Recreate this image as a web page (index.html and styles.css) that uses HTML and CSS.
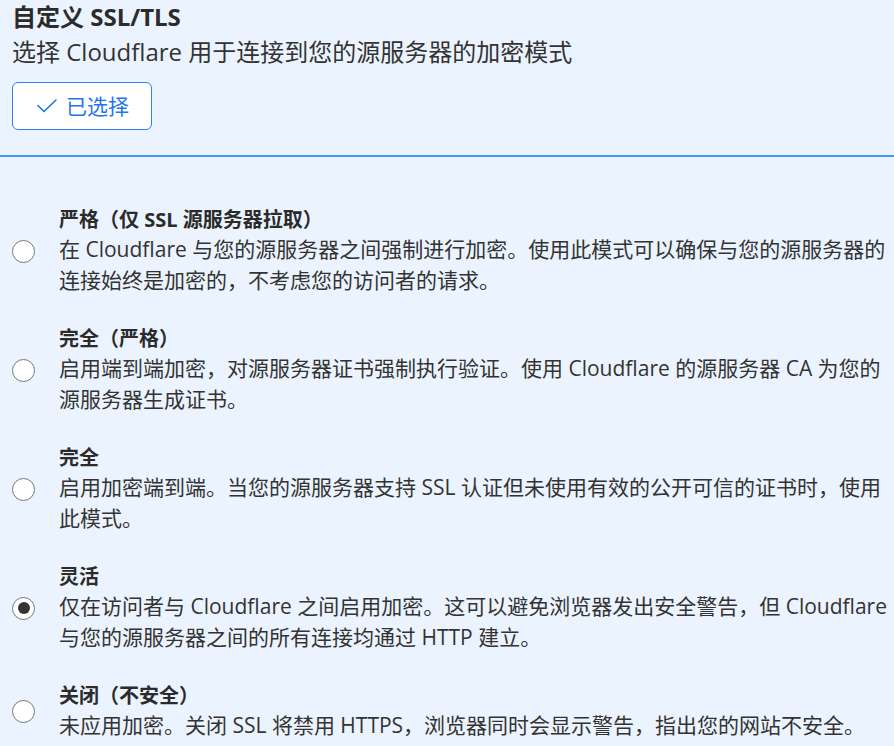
FILE: index.html
```html
<!DOCTYPE html>
<html lang="zh-CN">
<head>
<meta charset="utf-8">
<title>自定义 SSL/TLS</title>
<link rel="stylesheet" href="styles.css">
</head>
<body>
  <header class="header">
    <h1 class="title">自定义 SSL/TLS</h1>
    <p class="subtitle">选择 Cloudflare 用于连接到您的源服务器的加密模式</p>
    <button class="btn" type="button">
      <svg class="check" width="20" height="14" viewBox="0 0 20 14" aria-hidden="true">
        <polyline points="1,6.5 7,12.5 19,1" fill="none" stroke="currentColor" stroke-width="1.6" stroke-linecap="round" stroke-linejoin="round"/>
      </svg>
      <span>已选择</span>
    </button>
  </header>

  <main class="options">
    <label class="option">
      <span class="radio"></span>
      <span class="text">
        <span class="opt-title">严格（仅 SSL 源服务器拉取）</span>
        <span class="opt-desc">在 Cloudflare 与您的源服务器之间强制进行加密。使用此模式可以确保与您的源服务器的连接始终是加密的，不考虑您的访问者的请求。</span>
      </span>
    </label>
    <label class="option">
      <span class="radio"></span>
      <span class="text">
        <span class="opt-title">完全（严格）</span>
        <span class="opt-desc">启用端到端加密，对源服务器证书强制执行验证。使用 Cloudflare 的源服务器 CA 为您的源服务器生成证书。</span>
      </span>
    </label>
    <label class="option">
      <span class="radio"></span>
      <span class="text">
        <span class="opt-title">完全</span>
        <span class="opt-desc">启用加密端到端。当您的源服务器支持 SSL 认证但未使用有效的公开可信的证书时，使用此模式。</span>
      </span>
    </label>
    <label class="option">
      <span class="radio checked"></span>
      <span class="text">
        <span class="opt-title">灵活</span>
        <span class="opt-desc">仅在访问者与 Cloudflare 之间启用加密。这可以避免浏览器发出安全警告，但 Cloudflare 与您的源服务器之间的所有连接均通过 HTTP 建立。</span>
      </span>
    </label>
    <label class="option">
      <span class="radio"></span>
      <span class="text">
        <span class="opt-title">关闭（不安全）</span>
        <span class="opt-desc">未应用加密。关闭 SSL 将禁用 HTTPS，浏览器同时会显示警告，指出您的网站不安全。</span>
      </span>
    </label>
  </main>
</body>
</html>
```

FILE: styles.css
```css
html, body {
  margin: 0;
  padding: 0;
}

body {
  background: #ebf3fe;
  color: #333333;
  font-family: "Open Sans", "Noto Sans CJK SC", sans-serif;
  overflow: hidden;
}

.header {
  padding: 0 12px 25px;
  border-bottom: 2px solid #4a95f6;
}

.title {
  margin: 0;
  font-size: 24px;
  font-weight: 700;
  line-height: 34px;
  color: #2b2b2b;
}

.subtitle {
  margin: 0;
  font-size: 24px;
  line-height: 36px;
}

.btn {
  margin-top: 12px;
  width: 140px;
  height: 48px;
  display: flex;
  align-items: center;
  justify-content: center;
  gap: 9px;
  padding: 0 0 0 2px;
  background: #ffffff;
  border: 1.5px solid #2f80f5;
  border-radius: 6px;
  color: #1f74ee;
  font-family: "Open Sans", "Noto Sans CJK SC", sans-serif;
  font-size: 21px;
  line-height: 28px;
}

.check {
  display: block;
}

.options {
  display: flex;
  flex-direction: column;
  gap: 29px;
  padding: 49px 0 0 12px;
}

.option {
  display: flex;
  align-items: center;
  gap: 24px;
}

.radio {
  flex: none;
  width: 23px;
  height: 23px;
  box-sizing: border-box;
  border: 1px solid #777777;
  border-radius: 50%;
  background: #ffffff;
  display: flex;
  align-items: center;
  justify-content: center;
}

.radio.checked::after {
  content: "";
  width: 12px;
  height: 12px;
  border-radius: 50%;
  background: #333333;
}

.text {
  display: flex;
  flex-direction: column;
  min-width: 0;
}

.opt-title {
  font-size: 20px;
  font-weight: 700;
  line-height: 28px;
  color: #2b2b2b;
}

.opt-desc {
  font-size: 21px;
  line-height: 31px;
}
```
